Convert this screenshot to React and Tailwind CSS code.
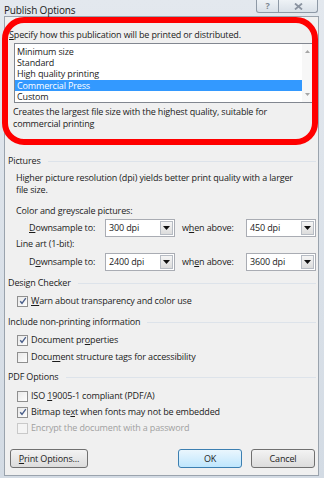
import React from "react";

function U({ children }) {
  return <span className="underline underline-offset-[1px]">{children}</span>;
}

function Combo({ value }) {
  return (
    <div className="flex h-[18px] w-[70px] items-stretch border border-[#a9acb3] bg-white">
      <div className="flex flex-1 items-center pl-[3px]">{value}</div>
      <div className="m-[1px] flex w-[13px] items-center justify-center border border-[#b7bcc4] bg-gradient-to-b from-[#f5f5f5] to-[#dcdcdc]">
        <svg width="7" height="4" viewBox="0 0 7 4">
          <path d="M0 0h7L3.5 4z" fill="#111" />
        </svg>
      </div>
    </div>
  );
}

function Check({ checked, disabled, children, className = "" }) {
  return (
    <div className={"flex h-[12px] items-center pl-[12px] " + className}>
      <div
        className={
          "flex h-[11px] w-[11px] items-center justify-center border " +
          (disabled
            ? "border-[#c9c9c9] bg-[#f4f4f4]"
            : "border-[#8f8f8f] bg-gradient-to-br from-[#e9e9e9] to-[#fdfdfd]")
        }
      >
        {checked && (
          <svg width="8" height="8" viewBox="0 0 8 8">
            <path
              d="M1.2 4.2 3 6.3 6.8 1.2"
              fill="none"
              stroke="#4a5f8a"
              strokeWidth="1.4"
            />
          </svg>
        )}
      </div>
      <span className={"ml-[3px] " + (disabled ? "text-[#a0a0a0]" : "")}>
        {children}
      </span>
    </div>
  );
}

function Section({ title, className = "" }) {
  return (
    <div className={"flex h-[12px] items-center pl-[3px] pr-[2px] " + className}>
      <span>{title}</span>
      <div className="ml-[7px] h-px flex-1 bg-[#dde3ea]" />
    </div>
  );
}

function DownsampleRow({ a, b, first, className = "" }) {
  return (
    <div className={"flex h-[18px] items-center pl-[24px] " + className}>
      <span className="w-[76px]">
        {first ? (
          <>
            <U>D</U>ownsample to:
          </>
        ) : (
          <>
            D<U>o</U>wnsample to:
          </>
        )}
      </span>
      <Combo value={a} />
      <span className="ml-[7px] w-[64px]">
        {first ? (
          <>
            w<U>h</U>en above:
          </>
        ) : (
          <>
            wh<U>e</U>n above:
          </>
        )}
      </span>
      <Combo value={b} />
    </div>
  );
}

const presets = [
  "Minimum size",
  "Standard",
  "High quality printing",
  "Commercial Press",
  "Custom",
];

export default function App() {
  return (
    <div className="relative h-[478px] w-[324px] overflow-hidden bg-gradient-to-b from-[#e3e8ee] to-[#d3dbe4] font-['Open_Sans',sans-serif] text-[9px] leading-[12px] tracking-[-0.15px] text-[#1b1b1b]">
      <div className="flex h-[16px] items-start justify-between">
        <span className="pl-[4px] pt-[3px] text-[10px] leading-[14px] text-[#222]">
          Publish Options
        </span>
        <div className="mr-[6px] flex h-[13px]">
          <div className="flex w-[23px] items-center justify-center rounded-bl-[3px] border border-t-0 border-[#8e99a6] bg-gradient-to-b from-[#eef2f6] to-[#d9e0e8] text-[9px] font-bold text-[#7d8794]">
            ?
          </div>
          <div className="flex w-[39px] items-center justify-center rounded-br-[3px] border border-l-0 border-t-0 border-[#8e99a6] bg-gradient-to-b from-[#eef2f6] to-[#d9e0e8]">
            <svg width="9" height="7" viewBox="0 0 9 7">
              <path
                d="M1 0.5 8 6.5M8 0.5 1 6.5"
                stroke="#8a93a0"
                strokeWidth="1.8"
              />
            </svg>
          </div>
        </div>
      </div>

      <div className="ml-[4px] h-[460px] w-[315px] border border-[#9aa3ad] bg-[#f0f0f0]">
        <div className="h-[11px] pl-[4px] pt-[12px] leading-[11px] box-content">
          <U>S</U>pecify how this publication will be printed or distributed.
        </div>

        <div className="ml-[9px] mt-[3px] flex h-[60px] w-[299px] border border-[#828790] bg-white">
          <div className="flex-1 pt-[2px]">
            {presets.map((p) => (
              <div
                key={p}
                className={
                  "h-[11.2px] pl-[2px] leading-[11.2px] " +
                  (p === "Commercial Press" ? "bg-[#3399ff] text-white" : "")
                }
              >
                {p}
              </div>
            ))}
          </div>
          <div className="flex w-[10px] flex-col items-center justify-between bg-[#f7f7f7] py-[6px]">
            <svg width="5" height="3" viewBox="0 0 5 3">
              <path d="M0 3h5L2.5 0z" fill="#a6a6a6" />
            </svg>
            <svg width="5" height="3" viewBox="0 0 5 3">
              <path d="M0 0h5L2.5 3z" fill="#a6a6a6" />
            </svg>
          </div>
        </div>

        <div className="mt-[3px] pl-[8px]">
          Creates the largest file size with the highest quality, suitable for
          <br />
          commercial printing
        </div>

        <Section title="Pictures" className="mt-[25px]" />
        <div className="mt-[5px] pl-[11px]">
          Higher picture resolution (dpi) yields better print quality with a larger
          <br />
          file size.
        </div>
        <div className="mt-[9px] pl-[11px]">Color and greyscale pictures:</div>
        <DownsampleRow a="300 dpi" b="450 dpi" first className="mt-[2px]" />
        <div className="mt-[1px] pl-[11px]">Line art (1-bit):</div>
        <DownsampleRow a="2400 dpi" b="3600 dpi" className="mt-[3px]" />

        <Section title="Design Checker" className="mt-[6px]" />
        <Check checked className="mt-[6px]">
          <U>W</U>arn about transparency and color use
        </Check>

        <Section title="Include non-printing information" className="mt-[9px]" />
        <Check checked className="mt-[6px]">
          Document pr<U>o</U>perties
        </Check>
        <Check className="mt-[5px]">
          Docu<U>m</U>ent structure tags for accessibility
        </Check>

        <Section title="PDF Options" className="mt-[8px]" />
        <Check className="mt-[7px]">
          ISO <U>1</U>9005-1 compliant (PDF/A)
        </Check>
        <Check checked className="mt-[4px]">
          Bitmap te<U>x</U>t when fonts may not be embedded
        </Check>
        <Check disabled className="mt-[4px]">
          Encrypt the document with a password
        </Check>

        <div className="mt-[15px] flex h-[19px] pl-[5px] pr-[3px]">
          <button className="w-[78px] rounded-[3px] border border-[#707070] bg-gradient-to-b from-[#f3f3f3] to-[#dcdcdc] leading-[17px]">
            <U>P</U>rint Options...
          </button>
          <button className="ml-auto w-[64px] rounded-[3px] border border-[#3c7fb1] bg-gradient-to-b from-[#eaf6fd] to-[#bee6fd] leading-[17px]">
            OK
          </button>
          <button className="ml-[9px] w-[64px] rounded-[3px] border border-[#707070] bg-gradient-to-b from-[#f3f3f3] to-[#dcdcdc] leading-[17px]">
            Cancel
          </button>
        </div>
      </div>

      <div className="pointer-events-none absolute left-[2px] top-[17px] h-[128px] w-[316px] rounded-[22px] border-[6px] border-[#ff0000]" />
    </div>
  );
}
